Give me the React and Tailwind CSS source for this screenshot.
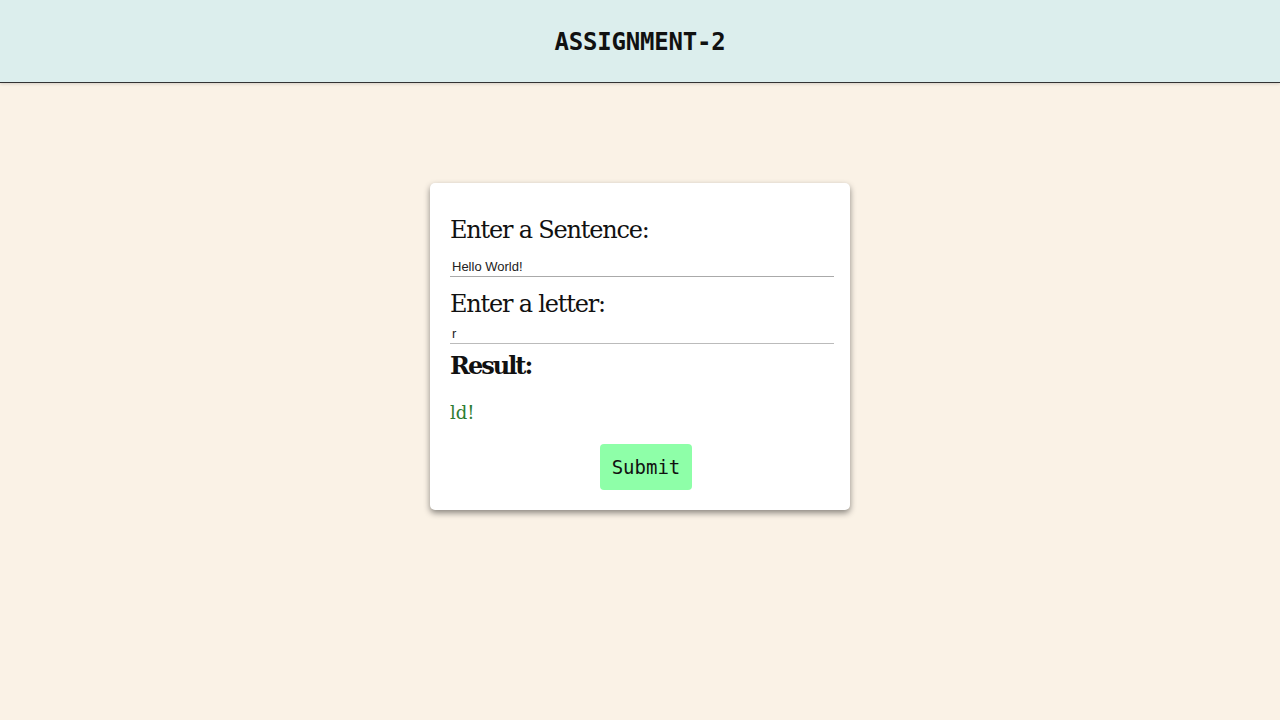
import React, { useState } from 'react'

export default function App() {
    const [sentence, setSentence] = useState('Hello World!')
    const [letter, setLetter] = useState('r')
    const [result, setResult] = useState('ld!')

    const handleSubmit = () => {
        const i = sentence.lastIndexOf(letter)
        setResult(i >= 0 ? sentence.slice(i + 1) : '')
    }

    return (
        <div className="min-h-screen bg-[#faf2e6]">
            <header className="h-[83px] bg-[#dceeed] border-b border-[#333] flex items-center justify-center pt-[2px] shadow-[0_1px_3px_rgba(0,0,0,0.15)]">
                <h1 className="text-[24px] font-bold text-[#111] tracking-[-0.2px]" style={{ fontFamily: '"DejaVu Sans Mono", "Liberation Mono", monospace' }}>
                    ASSIGNMENT-2
                </h1>
            </header>
            <main className="flex justify-center pt-[100px]">
                <div className="w-[420px] bg-white rounded-[5px] shadow-[0_3px_6px_rgba(0,0,0,0.45)] pl-5 pr-4 pt-[29px] pb-5" style={{ fontFamily: '"DejaVu Serif", "Liberation Serif", serif' }}>
                    <label className="block text-[24px] text-[#111] leading-[36px] tracking-[-1.2px]">Enter a Sentence:</label>
                    <input
                        value={sentence}
                        onChange={e => setSentence(e.target.value)}
                        className="mt-[11px] block w-full border-b border-[#aaa] text-[13px] text-[#222] px-[2px] pb-[1px] outline-none leading-[16px]"
                        style={{ fontFamily: '"Liberation Sans", Arial, sans-serif' }}
                    />
                    <label className="block mt-[9px] text-[24px] text-[#111] leading-[36px] tracking-[-1.2px]">Enter a letter:</label>
                    <input
                        value={letter}
                        onChange={e => setLetter(e.target.value)}
                        className="mt-[4px] block w-full border-b border-[#bbb] text-[13px] text-[#222] px-[2px] pb-[1px] outline-none leading-[16px]"
                        style={{ fontFamily: '"Liberation Sans", Arial, sans-serif' }}
                    />
                    <h2 className="mt-[4px] text-[24px] font-bold text-[#111] leading-[36px] tracking-[-2px]">Result:</h2>
                    <p className="mt-[17px] text-[18px] text-[#2e7d32] leading-[24px]">{result}</p>
                    <div className="flex justify-center mt-[19px]">
                        <button
                            onClick={handleSubmit}
                            className="ml-[8px] w-[92px] h-[46px] bg-[#8effa8] rounded-[4px] text-[19px] text-[#111]"
                            style={{ fontFamily: '"DejaVu Sans Mono", "Liberation Mono", monospace' }}
                        >
                            Submit
                        </button>
                    </div>
                </div>
            </main>
        </div>
    )
}
